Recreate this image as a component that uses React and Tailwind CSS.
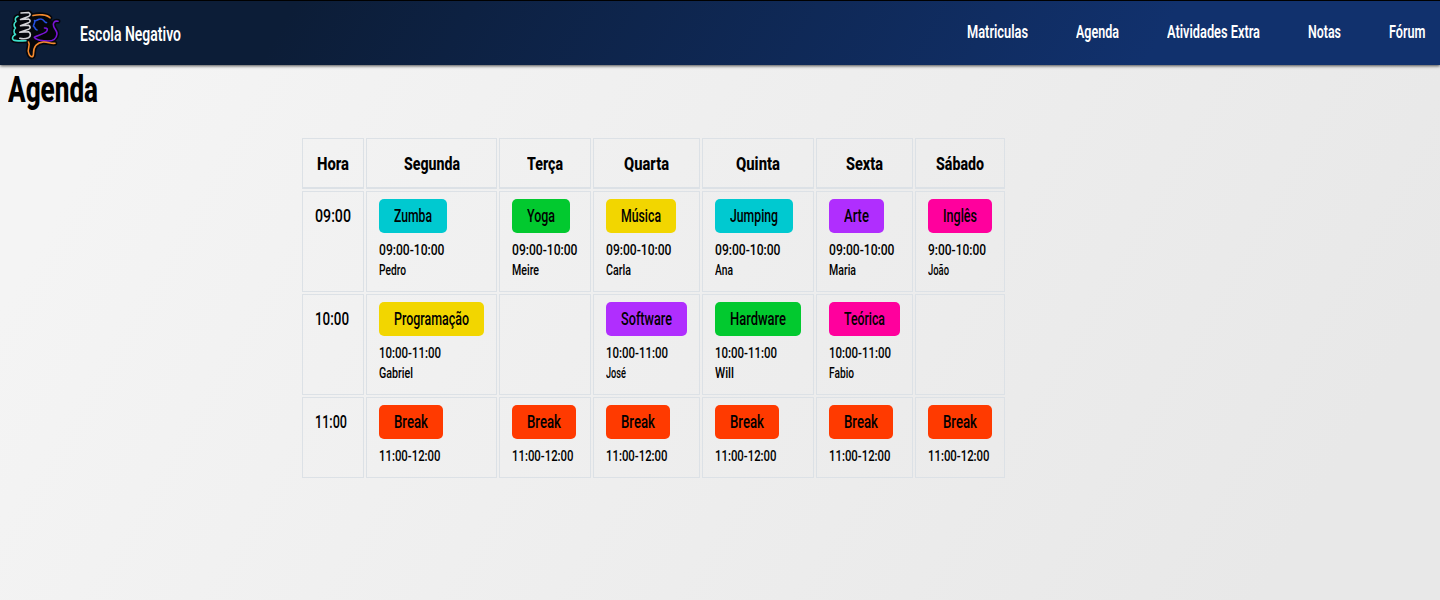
import { useLayoutEffect, useRef, useState } from "react";

// Condenses a text run horizontally so that it fills the given width.
function Fit({ w, className = "", children }) {
  const ref = useRef(null);
  const [scale, setScale] = useState(1);
  useLayoutEffect(() => {
    setScale(w / ref.current.getBoundingClientRect().width);
  }, [w]);
  return (
    <span className={"flex whitespace-nowrap " + className} style={{ width: w }}>
      <span ref={ref} className="block shrink-0 origin-left" style={{ transform: `scaleX(${scale})` }}>
        {children}
      </span>
    </span>
  );
}

const nav = [
  ["Matriculas", 61],
  ["Agenda", 43],
  ["Atividades Extra", 93],
  ["Notas", 33],
  ["Fórum", 36.5],
];

const days = [
  ["Hora", 32],
  ["Segunda", 56],
  ["Terça", 36],
  ["Quarta", 45],
  ["Quinta", 44],
  ["Sexta", 37],
  ["Sábado", 48],
];

const CYAN = "bg-[#00c9d0]";
const GREEN = "bg-[#02c92f]";
const YELLOW = "bg-[#f2d600]";
const PURPLE = "bg-[#b02efe]";
const PINK = "bg-[#ff009d]";
const RED = "bg-[#ff3a00]";

const brk = ["Break", 34, RED, "11:00-12:00", 61.5];

const rows = [
  {
    hour: ["09:00", 36],
    cells: [
      ["Zumba", 38, CYAN, "09:00-10:00", 65.5, "Pedro", 27],
      ["Yoga", 28, GREEN, "09:00-10:00", 65.5, "Meire", 27],
      ["Música", 40, YELLOW, "09:00-10:00", 65.5, "Carla", 25],
      ["Jumping", 48, CYAN, "09:00-10:00", 65.5, "Ana", 18],
      ["Arte", 25, PURPLE, "09:00-10:00", 65.5, "Maria", 27],
      ["Inglês", 34, PINK, "9:00-10:00", 58, "João", 21],
    ],
  },
  {
    hour: ["10:00", 34],
    cells: [
      ["Programação", 75, YELLOW, "10:00-11:00", 62, "Gabriel", 34],
      null,
      ["Software", 51, PURPLE, "10:00-11:00", 62, "José", 20],
      ["Hardware", 56, GREEN, "10:00-11:00", 62, "Will", 19],
      ["Teórica", 41, PINK, "10:00-11:00", 62, "Fabio", 25],
      null,
    ],
  },
  { hour: ["11:00", 32], cells: [brk, brk, brk, brk, brk, brk] },
];

const logoStrokes = [
  ["#3ee0cc", "M18 16.200C15.500 17 14.500 19 16 21.500C13.500 23.500 13.500 26 15.500 28C13.500 30 13.500 33 15.500 34.500C12.500 36 11.500 38.500 13.500 40C16 41.300 21 40.800 26 40.800"],
  ["#d4d4d8", "M21 13L28.500 12.500C30.800 13.500 30.500 15.500 28.500 16.500L20.500 19.500L28.500 19C30.800 20 30.500 22 28.500 22.800L20.500 25.800L28.500 25.300C30.800 26.500 30.500 28.500 28.500 29.300L19.800 32.200L28.500 31.800C31 33.200 31 36.500 28.500 37.800C25.500 39 22.500 39 19.800 38.300"],
  ["#f58a2e", "M33 15.600C39 14 47 14.500 50 17.800"],
  ["#2350e0", "M46.500 22.500C44 23.500 44.500 18.500 40.500 19C37.500 19.200 36.500 21.500 34.500 20.500C36 22.500 33 24.500 33.500 26.500C35.500 26.500 34 29.500 37 30"],
  ["#7a14d8", "M58 21.300C54.500 20.300 52.500 23 53.700 26.500C54.800 29.500 57.200 31 57 34C56.500 38.500 53 41 48 41C43.500 41 35.500 40 34.300 37.300C36 35.500 43.500 34.500 46.500 31.500C48.300 29.200 47 27.800 44.500 28"],
  ["#f58a2e", "M28.500 42C31 45.500 26.500 49 28.800 53.500C30.500 57.800 33.500 58 33.500 53.500C33.500 46.500 37.500 42.500 43.500 42C48 41.800 50.500 43.800 55 43.300"],
];

function Logo() {
  return (
    <svg className="h-[64px] w-[64px] shrink-0" viewBox="0 1 64 64" fill="none" strokeLinecap="round" strokeLinejoin="round">
      <path fill="#05070c" d="M18 15L31 12.500L50 17L54 26L57 34L50 41L38 44L31 52L28 42L14 40L15 20Z" />
      <g stroke="#05070c" strokeWidth="4.800">
        {logoStrokes.map(([, d]) => <path key={d} d={d} />)}
      </g>
      <g strokeWidth="1.600">
        {logoStrokes.map(([color, d]) => <path key={d} stroke={color} d={d} />)}
      </g>
    </svg>
  );
}

function Lesson({ data }) {
  if (!data) return <div className="border border-[#dce1e6]" />;
  const [name, w, color, time, tw, who, ww] = data;
  return (
    <div className="flex flex-col items-start border border-[#dce1e6] px-3 pt-[7px]">
      <div className={"flex h-[34px] items-center rounded-[5px] px-[15px] pt-[2px] text-[18.5px] font-medium " + color}>
        <Fit w={w}>{name}</Fit>
      </div>
      <Fit w={tw} className="mt-2 text-[14.5px] font-medium leading-[20px]">{time}</Fit>
      {who && <Fit w={ww} className="text-[14.5px] font-medium leading-[20px]">{who}</Fit>}
    </div>
  );
}

export default function App() {
  return (
    <div className="flex h-[600px] w-[1440px] flex-col overflow-hidden bg-[linear-gradient(120deg,#f4f4f4_10%,#e8e8e8_90%)] font-['Roboto',sans-serif] text-black">
      <header className="flex h-[65px] shrink-0 items-center border-t border-black bg-[linear-gradient(120deg,#0c1d37_20%,#11316d_80%)] pr-[15px] text-white shadow-[0_1px_3px_#000000b0]">
        <Logo />
        <Fit w={101} className="ml-4 pt-[2px] text-[20px] font-semibold">Escola Negativo</Fit>
        <nav className="ml-auto flex gap-12 text-[18.5px] font-semibold">
          {nav.map(([label, w]) => (
            <a key={label} href="#"><Fit w={w}>{label}</Fit></a>
          ))}
        </nav>
      </header>
      <main>
        <h1 className="ml-2 mt-[1px] text-[36px] font-extrabold leading-[48px]"><Fit w={90}>Agenda</Fit></h1>
        <div className="ml-[302px] mt-[24px] grid w-[703px] grid-cols-[62px_131px_92px_107px_112px_97px_90px] grid-rows-[51px_101px_101px_81px] gap-[2px]">
          {days.map(([label, w]) => (
            <div key={label} className="flex items-center justify-center border border-b-2 border-[#dce1e6] pt-px text-[18px] font-extrabold">
              <Fit w={w}>{label}</Fit>
            </div>
          ))}
          {rows.map((row) => [
            <div key={row.hour[0]} className="border border-[#dce1e6] px-3 pt-[10px] text-[18.5px] font-medium leading-[28px]">
              <Fit w={row.hour[1]}>{row.hour[0]}</Fit>
            </div>,
            ...row.cells.map((cell, i) => <Lesson key={row.hour[0] + i} data={cell} />),
          ])}
        </div>
      </main>
    </div>
  );
}
